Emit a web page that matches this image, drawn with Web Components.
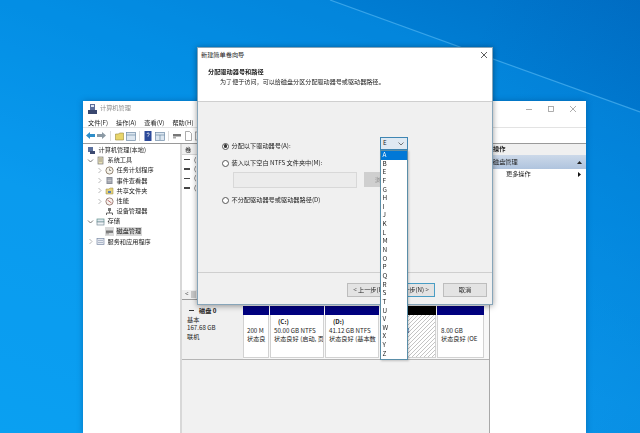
<!DOCTYPE html>
<html lang="zh">
<head>
<meta charset="utf-8">
<title>计算机管理</title>
<style>
  html, body { margin: 0; height: 100%; overflow: hidden; }
  body { font: 6.2px/1 "Noto Sans CJK SC", "Liberation Sans", sans-serif; color: #222; }
</style>
</head>
<body>
<desk-top>
  <mmc-window>
    <tree-item slot="tree" depth="0" icon="pc">计算机管理(本地)</tree-item>
    <tree-item slot="tree" depth="1" arrow="open" icon="tools">系统工具</tree-item>
    <tree-item slot="tree" depth="2" arrow="closed" icon="clock">任务计划程序</tree-item>
    <tree-item slot="tree" depth="2" arrow="closed" icon="log">事件查看器</tree-item>
    <tree-item slot="tree" depth="2" arrow="closed" icon="share">共享文件夹</tree-item>
    <tree-item slot="tree" depth="2" arrow="closed" icon="perf">性能</tree-item>
    <tree-item slot="tree" depth="2" icon="dev">设备管理器</tree-item>
    <tree-item slot="tree" depth="1" arrow="open" icon="store">存储</tree-item>
    <tree-item slot="tree" depth="2" icon="disk" selected>磁盘管理</tree-item>
    <tree-item slot="tree" depth="1" arrow="closed" icon="svc">服务和应用程序</tree-item>

    <disk-part slot="parts" w="26" size="200 M" state="状态良"></disk-part>
    <disk-part slot="parts" w="54" name="(C:)" size="50.00 GB NTFS" state="状态良好 (启动, 页"></disk-part>
    <disk-part slot="parts" w="54" name="(D:)" size="41.12 GB NTFS" state="状态良好 (基本数"></disk-part>
    <disk-part slot="parts" w="56" size="68.36 GB" kind="free"></disk-part>
    <disk-part slot="parts" w="47" size="8.00 GB" state="状态良好 (OE"></disk-part>
  </mmc-window>

  <wizard-dialog>
    <drive-combo slot="combo" value="E" letters="A B E F G H I J K L M N O P Q R S T U V W X Y Z"></drive-combo>
  </wizard-dialog>
</desk-top>

<script>
class DeskTop extends HTMLElement {
  constructor() {
    super();
    this.attachShadow({ mode: 'open' }).innerHTML = `
      <style>
        :host {
          display: block;
          position: relative;
          width: 640px;
          height: 433px;
          overflow: hidden;
          background:
            linear-gradient(112deg, rgba(255,255,255,0) 0 60%, rgba(0,60,150,.16) 100%),
            linear-gradient(200deg, #0070c6 0%, #0088de 32%, #0a9bee 62%, #0ba2f2 100%);
        }
        svg { position: absolute; inset: 0; }
        .soft { position: absolute; inset: 0; filter: blur(.3px); }
      </style>
      <svg width="640" height="433" aria-hidden="true">
        <polygon points="330,0 640,112 640,433 0,433 0,0" fill="#0a9cf0" opacity=".28"/>
        <line x1="330" y1="0" x2="640" y2="112" stroke="#5cbcf5" stroke-width="1.2" opacity=".6"/>
      </svg>
      <div class="soft"><slot></slot></div>`;
  }
}

const TREE_ICONS = {
  pc: '<rect x="1" y="1" width="5" height="5" fill="#5a6f9c"/><rect x="3" y="5" width="5" height="3" fill="#3c4a70"/>',
  tools: '<rect x="2" y="1" width="5" height="7" fill="#e8e0b8" stroke="#777" stroke-width=".7"/><path d="M3 3h3M3 5h3" stroke="#666" stroke-width=".6"/>',
  clock: '<circle cx="4.5" cy="4.5" r="3.6" fill="#f6f3ea" stroke="#7a6a55" stroke-width=".8"/><path d="M4.5 2.5v2h1.6" stroke="#555" stroke-width=".6" fill="none"/>',
  log: '<rect x="1.5" y="1" width="6" height="7" fill="#8a8f9a"/><path d="M2.5 3h4M2.5 4.5h4M2.5 6h4" stroke="#eee" stroke-width=".6"/>',
  share: '<path d="M1 3h3l1-1h3v6H1z" fill="#e6d27a" stroke="#998a4a" stroke-width=".5"/><rect x="3" y="5" width="3" height="2" fill="#5a7fb5"/>',
  perf: '<circle cx="4.5" cy="4.5" r="3.6" fill="#f7f2ee" stroke="#8a6a60" stroke-width=".8"/><path d="M2.5 3l4 3" stroke="#a33" stroke-width=".7"/>',
  dev: '<rect x="3" y="1" width="3" height="3" fill="#777"/><path d="M1.5 8V6h6v2" stroke="#555" stroke-width=".9" fill="none"/><path d="M4.5 4v2" stroke="#555" stroke-width=".8"/>',
  store: '<rect x="1" y="2" width="7" height="3" fill="#dfe6ee" stroke="#5d8f8a" stroke-width=".7"/><rect x="1" y="5" width="7" height="3" fill="#eef2f5" stroke="#7a8f9a" stroke-width=".7"/>',
  disk: '<rect x="1" y="3.5" width="7" height="2.4" fill="#777"/><rect x="1" y="6" width="3" height="1.4" fill="#aaa"/>',
  svc: '<rect x="1" y="1.5" width="7" height="6" fill="#e5e9f0" stroke="#7b8aa5" stroke-width=".7"/><path d="M2 3.5h5M2 5.5h5" stroke="#8a98b0" stroke-width=".6"/>'
};

class TreeItem extends HTMLElement {
  constructor() {
    super();
    this.attachShadow({ mode: 'open' });
  }

  connectedCallback() {
    const depth = +this.getAttribute('depth');
    const arrow = this.getAttribute('arrow');
    const chev = arrow === 'open'
      ? '<path d="M1 2.5l2.5 2.5L6 2.5" fill="none" stroke="#555" stroke-width=".8"/>'
      : arrow === 'closed' ? '<path d="M2.5 1l2.5 2.5L2.5 6" fill="none" stroke="#a6a6a6" stroke-width=".8"/>' : '';
    this.shadowRoot.innerHTML = `
      <style>
        :host { display: flex; align-items: center; height: 10.2px; padding-left: ${[4, 4, 13][depth]}px; white-space: nowrap; }
        .chev { width: 7px; height: 7px; flex: none; margin-right: 2px; }
        .ico { width: 9px; height: 9px; flex: none; margin-right: 1.5px; }
        .txt { padding: 1.5px 1px; }
        :host([selected]) .txt, :host([selected]) .ico { background: #d9d9d9; }
      </style>
      <svg class="chev" viewBox="0 0 7 7" style="${depth === 0 ? 'display:none' : ''}">${chev}</svg>
      <svg class="ico" viewBox="0 0 9 9">${TREE_ICONS[this.getAttribute('icon')] || ''}</svg>
      <span class="txt"><slot></slot></span>`;
  }
}

class DiskPart extends HTMLElement {
  constructor() {
    super();
    this.attachShadow({ mode: 'open' });
  }

  connectedCallback() {
    const free = this.getAttribute('kind') === 'free';
    const name = this.getAttribute('name') || '';
    this.shadowRoot.innerHTML = `
      <style>
        :host { display: flex; flex-direction: column; flex: none; width: ${this.getAttribute('w')}px; height: 52px; margin-right: 1px; box-sizing: border-box; }
        .bar { height: 9px; flex: none; background: ${free ? '#000' : '#00007f'}; }
        .box {
          flex: 1;
          min-height: 0;
          overflow: hidden;
          border: 1px solid #d2d2d2;
          border-width: 0 1.5px 1.5px 1px;
          padding: 3px 0 0 3px;
          line-height: 8.6px;
          white-space: nowrap;
          background: ${free ? 'repeating-linear-gradient(-45deg, #fff 0 2px, #c4c4c4 2px 2.8px)' : '#fff'};
        }
        .name { height: 8.6px; padding-left: 4px; font-weight: 700; }
      </style>
      <div class="bar"></div>
      <div class="box">
        <div class="name">${name}</div>
        <div>${this.getAttribute('size') || ''}</div>
        <div>${this.getAttribute('state') || ''}</div>
      </div>`;
  }
}

class MmcWindow extends HTMLElement {
  constructor() {
    super();
    this.attachShadow({ mode: 'open' }).innerHTML = `
      <style>
        :host {
          position: absolute;
          left: 83px;
          top: 101px;
          width: 503px;
          height: 332px;
          display: grid;
          grid-template-rows: 15px 12px 16px 1fr;
          background: #fff;
          box-shadow: 0 0 6px rgba(0,40,90,.35);
          overflow: hidden;
        }
        .title { display: flex; align-items: center; padding: 0 6px 0 5px; gap: 3px; color: #8a8a8a; }
        .title svg.logo { width: 9px; height: 10px; }
        .caps { margin-left: auto; display: flex; align-items: center; gap: 14px; padding-right: 3px; }
        .menu { display: flex; align-items: center; gap: 8px; padding: 3px 0 0 5px; border-bottom: 1px solid #e3e3e3; box-sizing: border-box; }
        .tools { display: flex; align-items: center; padding-left: 3px; border-bottom: 1px solid #9a9a9a; }
        .tools b { display: block; width: 1px; height: 10px; background: #ddd; flex: none; }
        .main { display: grid; grid-template-columns: 97px 310px 96px; min-height: 0; }
        .tree { padding-top: 1px; }
        .center { display: grid; grid-template-rows: 156px 60px 1fr; border-left: 2px solid #d8d8d8; border-right: 1px solid #a8a8a8; min-height: 0; }
        .vols { display: flex; flex-direction: column; border-bottom: 1px solid #9a9a9a; overflow: hidden; background: #fff; }
        .vhead { height: 11px; flex: none; background: #f0f0f0; border-bottom: 1px solid #d6d6d6; padding: 3px 0 0 3px; box-sizing: border-box; }
        .vrow { height: 9.4px; flex: none; padding-left: 2px; display: flex; align-items: center; gap: 4px; }
        .vrow::before { content: ''; width: 6px; height: 1.5px; background: #444; }
        .hbar { margin-top: auto; height: 9px; display: flex; align-items: center; gap: 3px; padding-left: 3px; background: #f0f0f0; }
        .hbar i { display: block; width: 5px; height: 7px; background: #c9c9c9; }
        .disk { display: flex; background: #f8f8f8; border-bottom: 1px solid #b5b5b5; padding-top: 6px; box-sizing: border-box; }
        .dlabel { width: 61px; flex: none; margin-top: -6px; padding: 7px 0 0 5px; background: #f0f0f0; box-sizing: border-box; line-height: 8.7px; }
        .dlabel b::before { content: ''; display: inline-block; width: 5px; height: 1.5px; background: #333; margin: 0 5px 2px 2px; }
        .rest { background: #f1f1f1; }
        .act { display: flex; flex-direction: column; }
        .ahead { height: 11px; background: #f0f0f0; padding: 2px 0 0 3px; box-sizing: border-box; font-weight: 700; }
        .aband { height: 14px; display: flex; align-items: center; justify-content: space-between; padding: 0 4px 0 3px; background: linear-gradient(#ccd9e9, #afc4de); }
        .amore { height: 11px; display: flex; align-items: center; justify-content: space-between; padding: 0 5px 0 16px; }
      </style>
      <div class="title">
        <svg class="logo" viewBox="0 0 9 10"><rect x="2" width="5" height="6" fill="#5b6c9a"/><rect y="6" width="9" height="4" fill="#39476f"/><rect x="3" y="1" width="3" height="2" fill="#dfe5f2"/></svg>
        <span>计算机管理</span>
        <span class="caps">
          <svg width="8" height="8"><path d="M1 4.5h6" stroke="#999" stroke-width=".8"/></svg>
          <svg width="8" height="8"><rect x="1.5" y="1.5" width="5" height="5" fill="none" stroke="#999" stroke-width=".8"/></svg>
          <svg width="8" height="8"><path d="M1 1l6 6M7 1l-6 6" stroke="#999" stroke-width=".8"/></svg>
        </span>
      </div>
      <div class="menu"><span>文件(F)</span><span>操作(A)</span><span>查看(V)</span><span>帮助(H)</span></div>
      <div class="tools">
        <svg width="9" height="9"><path d="M0 4.5L4 1v2h5v3H4v2z" fill="#2f8ec9"/></svg>
        <svg width="9" height="9" style="margin-left:2px"><path d="M9 4.500L5 1v2H0v3h5v2z" fill="#8c9aa5"/></svg>
        <b style="margin-left:4px"></b>
        <svg width="9" height="10" style="margin-left:4px"><path d="M.5 3h3l1-1h4v7h-8z" fill="#e8d56a" stroke="#9a8b3c" stroke-width=".6"/></svg>
        <svg width="10" height="10" style="margin-left:2px"><rect x=".5" y="1.5" width="9" height="8" fill="#dce6f0" stroke="#6e8aa5" stroke-width=".7"/><path d="M.5 4h9" stroke="#6e8aa5" stroke-width=".7"/></svg>
        <b style="margin-left:3px"></b>
        <svg width="8" height="10" style="margin-left:4px"><rect x=".5" y="0" width="7" height="10" fill="#2c4a9a"/><path d="M3 3c0-1.500 2.500-1.200 2.200.2C5 4.200 4 4.300 4 5.600" fill="none" stroke="#fff" stroke-width=".8"/></svg>
        <svg width="10" height="10" style="margin-left:3px"><rect x=".5" y="1.500" width="9" height="8" fill="#dce6f0" stroke="#6e8aa5" stroke-width=".7"/><path d="M.5 4h9M5 4v5" stroke="#6e8aa5" stroke-width=".7"/></svg>
        <b style="margin-left:3px"></b>
        <svg width="9" height="10" style="margin-left:3px"><rect x="1" y="3" width="8" height="2.500" fill="#777"/><rect x="1" y="6" width="3" height="1.500" fill="#aaa"/></svg>
        <svg width="7" height="10" style="margin-left:4px"><path d="M.5 .5h4l2 2v7h-6z" fill="#fff" stroke="#888" stroke-width=".7"/></svg>
        <svg width="7" height="10" style="margin-left:3px"><rect x=".5" y="1" width="6" height="8" fill="#fff" stroke="#888" stroke-width=".7"/></svg>
      </div>
      <div class="main">
        <div class="tree"><slot name="tree"></slot></div>
        <div class="center">
          <div class="vols">
            <div class="vhead">卷</div>
            <div class="vrow">(</div><div class="vrow">(</div><div class="vrow">(</div><div class="vrow">(</div>
            <div class="hbar"><span>&lt;</span><i></i></div>
          </div>
          <div class="disk">
            <div class="dlabel"><b>磁盘 0</b><br>基本<br>167.68 GB<br>联机</div>
            <slot name="parts"></slot>
          </div>
          <div class="rest"></div>
        </div>
        <div class="act">
          <div class="ahead">操作</div>
          <div class="aband"><span>磁盘管理</span><svg width="5" height="3"><path d="M0 3l2.500-3L5 3z" fill="#222"/></svg></div>
          <div class="amore"><span>更多操作</span><svg width="3" height="5"><path d="M0 0l3 2.500L0 5z" fill="#111"/></svg></div>
        </div>
      </div>`;
  }
}

class RadioRow extends HTMLElement {
  constructor() {
    super();
    this.attachShadow({ mode: 'open' }).innerHTML = `
      <style>
        :host { display: flex; align-items: center; gap: 2.500px; height: 10px; white-space: nowrap; }
        .dot { width: 7px; height: 7px; border: .8px solid #555; border-radius: 50%; box-sizing: border-box; flex: none; display: grid; place-items: center; background: #fff; }
        :host([checked]) .dot::after { content: ''; width: 3.600px; height: 3.600px; border-radius: 50%; background: #333; }
      </style>
      <span class="dot"></span><slot></slot>`;
  }
}

class DriveCombo extends HTMLElement {
  constructor() {
    super();
    this.attachShadow({ mode: 'open' });
  }

  connectedCallback() {
    const items = this.getAttribute('letters').split(' ')
      .map((l, i) => `<div class="it${i === 0 ? ' on' : ''}">${l}</div>`).join('');
    this.shadowRoot.innerHTML = `
      <style>
        :host { display: block; position: relative; width: 28px; height: 13px; box-sizing: border-box; border: 1px solid #3f86b3; background: #dfe9f2; flex: none; }
        .val { display: flex; align-items: center; justify-content: space-between; height: 100%; padding: 0 3px 0 2px; }
        .list { position: absolute; left: -1px; top: 12px; width: 28px; box-sizing: border-box; background: #fff; border: 1px solid #5a8ea8; padding-bottom: 1px; box-shadow: 1px 1px 2px rgba(0,0,0,.2); }
        .it { height: 8.650px; line-height: 8.650px; padding-left: 1.500px; font-size: 6.400px; }
        .it.on { background: #0078d7; color: #fff; }
      </style>
      <div class="val"><span>${this.getAttribute('value')}</span><svg width="6" height="4"><path d="M.5 .5L3 3l2.500-2.500" fill="none" stroke="#555" stroke-width=".8"/></svg></div>
      <div class="list">${items}</div>`;
  }
}

class WizardDialog extends HTMLElement {
  constructor() {
    super();
    this.attachShadow({ mode: 'open' }).innerHTML = `
      <style>
        :host {
          position: absolute;
          left: 197px;
          top: 47px;
          width: 296px;
          height: 258px;
          box-sizing: border-box;
          display: grid;
          grid-template-rows: 54px 1fr 32px;
          background: #f0f0f0;
          border: 1px solid rgba(30,90,130,.5);
          box-shadow: 0 1px 6px rgba(0,0,0,.4);
        }
        .head { background: #fff; border-bottom: 1px solid #cfcfcf; padding: 2px 4px 0 3px; box-sizing: border-box; }
        .ttl { display: flex; justify-content: space-between; align-items: center; height: 10px; }
        .h1 { font-weight: 700; margin: 9px 0 0 7px; }
        .h2 { margin: 4px 0 0 19px; font-size: 6.100px; }
        .body { padding: 39px 0 0 24px; display: flex; flex-direction: column; }
        .r1 { display: flex; height: 10px; }
        .slotpos { margin: -4px 84px 0 auto; }
        .path { display: flex; gap: 7px; margin: 4px 0 7px 11px; height: 16px; }
        .inp { width: 124px; border: 1px solid #d8d8d8; background: #ececec; box-sizing: border-box; }
        .brw { width: 44px; height: 15px; background: #cfcfcf; color: #8a8a8a; line-height: 15px; padding-left: 11px; box-sizing: border-box; }
        .gap { height: 7px; }
        .foot { border-top: 1px solid #cfcfcf; display: flex; align-items: flex-start; padding: 10px 0 0 149px; box-sizing: border-box; }
        .btn { width: 44px; height: 14px; box-sizing: border-box; background: #e3e3e3; border: 1px solid #bdbdbd; text-align: center; line-height: 12px; white-space: nowrap; }
        .btn.def { border: 1.500px solid #4a9dc4; margin-right: 8px; line-height: 11px; }
      </style>
      <div class="head">
        <div class="ttl"><span>新建简单卷向导</span><svg width="8" height="8"><path d="M1 1l6 6M7 1l-6 6" stroke="#333" stroke-width=".8"/></svg></div>
        <div class="h1">分配驱动器号和路径</div>
        <div class="h2">为了便于访问，可以给磁盘分区分配驱动器号或驱动器路径。</div>
      </div>
      <div class="body">
        <div class="r1">
          <radio-row checked>分配以下驱动器号(A):</radio-row>
          <div class="slotpos"><slot name="combo"></slot></div>
        </div>
        <div class="gap"></div>
        <radio-row>装入以下空白 NTFS 文件夹中(M):</radio-row>
        <div class="path"><div class="inp"></div><div class="brw">浏览(R)...</div></div>
        <radio-row>不分配驱动器号或驱动器路径(D)</radio-row>
      </div>
      <div class="foot">
        <div class="btn">&lt; 上一步(B)</div>
        <div class="btn def">下一步(N) &gt;</div>
        <div class="btn">取消</div>
      </div>`;
  }
}

customElements.define('radio-row', RadioRow);
customElements.define('drive-combo', DriveCombo);
customElements.define('wizard-dialog', WizardDialog);
customElements.define('disk-part', DiskPart);
customElements.define('tree-item', TreeItem);
customElements.define('mmc-window', MmcWindow);
customElements.define('desk-top', DeskTop);
</script>
</body>
</html>
